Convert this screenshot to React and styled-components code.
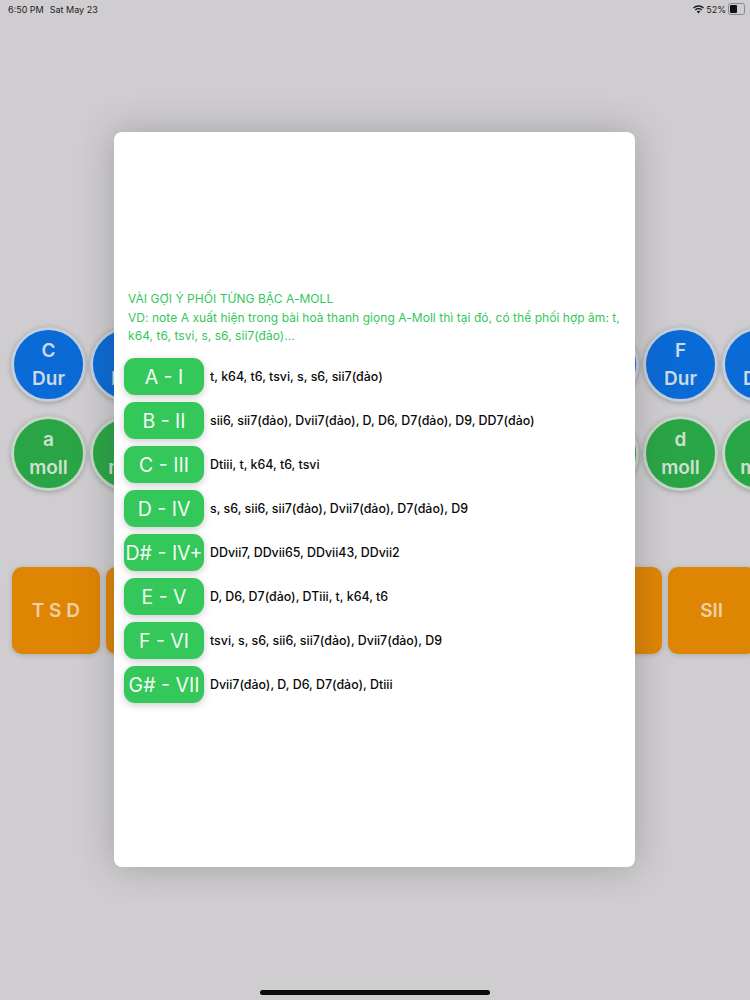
import React from "react";
import styled, { createGlobalStyle } from "styled-components";

const majors = ["C", "G", "D", "A", "E", "B", "F#", "Bb", "F", "D"];
const minors = ["a", "e", "b", "f#", "c#", "g#", "g", "c", "d", "a"];
const functions = ["T S D", "T", "S", "D", "TII", "TIII", "TVI", "SII", "SII"];
const suggestions = [
    ["A - I", "t, k64, t6, tsvi, s, s6, sii7(đảo)"],
    ["B - II", "sii6, sii7(đảo), Dvii7(đảo), D, D6, D7(đảo), D9, DD7(đảo)"],
    ["C - III", "Dtiii, t, k64, t6, tsvi"],
    ["D - IV", "s, s6, sii6, sii7(đảo), Dvii7(đảo), D7(đảo), D9"],
    ["D# - IV+", "DDvii7, DDvii65, DDvii43, DDvii2"],
    ["E - V", "D, D6, D7(đảo), DTiii, t, k64, t6"],
    ["F - VI", "tsvi, s, s6, sii6, sii7(đảo), Dvii7(đảo), D9"],
    ["G# - VII", "Dvii7(đảo), D, D6, D7(đảo), Dtiii"],
];

function App() {
    return (
        <Screen>
            <GlobalStyle />
            <StatusBar>
                <StatusGroup>
                    <span>6:50 PM</span>
                    <span>Sat May 23</span>
                </StatusGroup>
                <StatusRight>
                    <svg width="11" height="9" viewBox="0 0 11 9">
                        <path
                            d="M5.5 8.6 3.7 6.6a2.6 2.6 0 0 1 3.6 0zM2.8 5.6 1.8 4.5a5.4 5.4 0 0 1 7.4 0l-1 1.1a4 4 0 0 0-5.4 0zM.9 3.6 0 2.5a8 8 0 0 1 11 0l-.9 1.1a6.7 6.7 0 0 0-9.2 0z"
                            fill="#1c1c1e"
                        />
                    </svg>
                    <span>52%</span>
                    <Battery>
                        <BatteryLevel />
                    </Battery>
                </StatusRight>
            </StatusBar>
            <KeyRow $top={309}>
                {majors.map((key, i) => (
                    <KeyCircle key={i} $color="#0a6ad6" $ring="#c3cfdc" $text="#ccd9e8">
                        <span>{key}</span>
                        <span>Dur</span>
                    </KeyCircle>
                ))}
            </KeyRow>
            <KeyRow $top={14}>
                {minors.map((key, i) => (
                    <KeyCircle key={i} $color="#2aa545" $ring="#c6d6c8" $text="#cfe0d2">
                        <span>{key}</span>
                        <span>moll</span>
                    </KeyCircle>
                ))}
            </KeyRow>
            <FunctionRow>
                {functions.map((name, i) => (
                    <FunctionKey key={i}>{name}</FunctionKey>
                ))}
            </FunctionRow>
            <Modal>
                <Intro>
                    VÀI GỢI Ý PHỐI TỪNG BẬC A-MOLL
                    <br />
                    VD: note A xuất hiện trong bài hoà thanh giọng A-Moll thì
                    tại đó, có thể phối hợp âm: t, k64, t6, tsvi, s, s6,
                    sii7(đảo)...
                </Intro>
                <SuggestionList>
                    {suggestions.map(([degree, chords]) => (
                        <SuggestionRow key={degree}>
                            <DegreeButton>{degree}</DegreeButton>
                            <Chords>{chords}</Chords>
                        </SuggestionRow>
                    ))}
                </SuggestionList>
            </Modal>
            <HomeIndicator />
        </Screen>
    );
}

export default App;

const GlobalStyle = createGlobalStyle`
    body {
        margin: 0;
        font-family: Inter, "Liberation Sans", sans-serif;
    }
`;
const Screen = styled.div`
    position: relative;
    width: 750px;
    height: 1000px;
    overflow: hidden;
    background-color: #cfcdd0;
`;
const StatusBar = styled.div`
    display: flex;
    justify-content: space-between;
    align-items: center;
    height: 18px;
    padding: 0 5px 0 8px;
    font-size: 9px;
    color: #1c1c1e;
`;
const StatusGroup = styled.div`
    display: flex;
    gap: 6px;
`;
const StatusRight = styled.div`
    display: flex;
    align-items: center;
    gap: 2px;
`;
const Battery = styled.div`
    width: 13px;
    height: 8px;
    padding: 1px;
    border: 0.5px solid #8a898c;
    border-radius: 2.5px;
`;
const BatteryLevel = styled.div`
    width: 52%;
    height: 100%;
    background-color: #111;
    border-radius: 1px;
`;
const KeyRow = styled.div`
    display: flex;
    gap: 4px;
    margin-top: ${(props) => props.$top}px;
    padding-left: 11px;
`;
const KeyCircle = styled.div`
    flex: none;
    display: flex;
    flex-direction: column;
    justify-content: center;
    align-items: center;
    box-sizing: border-box;
    width: 75px;
    height: 75px;
    border: 3px solid ${(props) => props.$ring};
    border-radius: 50%;
    background-color: ${(props) => props.$color};
    box-shadow: 0 1px 5px rgba(70, 70, 70, 0.4);
    font-size: 19px;
    line-height: 28px;
    font-weight: 600;
    color: ${(props) => props.$text};
`;
const FunctionRow = styled.div`
    display: flex;
    gap: 6px;
    margin-top: 76px;
    padding-left: 12px;
`;
const FunctionKey = styled.div`
    flex: none;
    display: flex;
    justify-content: center;
    align-items: center;
    width: 87.7px;
    height: 87px;
    border-radius: 10px;
    background-color: #df8504;
    box-shadow: 0 1px 5px rgba(70, 70, 70, 0.25);
    font-size: 19px;
    font-weight: 600;
    color: #eed0a5;
`;
const Modal = styled.div`
    position: absolute;
    top: 132px;
    left: 114px;
    box-sizing: border-box;
    width: 521px;
    height: 735px;
    padding: 158px 10px 0;
    border-radius: 8px;
    background-color: #fff;
    box-shadow: 0 0 36px rgba(60, 60, 60, 0.3);
`;
const Intro = styled.div`
    padding: 0 4px;
    font-size: 12px;
    line-height: 18.5px;
    letter-spacing: 0.05px;
    color: #34c759;
`;
const SuggestionList = styled.div`
    display: flex;
    flex-direction: column;
    gap: 7px;
    margin-top: 12.5px;
`;
const SuggestionRow = styled.div`
    display: flex;
    align-items: center;
    gap: 6px;
`;
const DegreeButton = styled.div`
    flex: none;
    display: flex;
    justify-content: center;
    align-items: center;
    width: 80px;
    height: 37px;
    border-radius: 11px;
    background-color: #34c759;
    box-shadow: 0 2px 7px rgba(80, 80, 80, 0.3);
    font-size: 19.5px;
    color: #f2fbf4;
    white-space: nowrap;
`;
const Chords = styled.div`
    font-size: 12.4px;
    font-weight: 500;
    color: #0a0a0a;
`;
const HomeIndicator = styled.div`
    position: absolute;
    bottom: 5px;
    left: 260px;
    width: 230px;
    height: 5px;
    border-radius: 3px;
    background-color: #0b0b0b;
`;
